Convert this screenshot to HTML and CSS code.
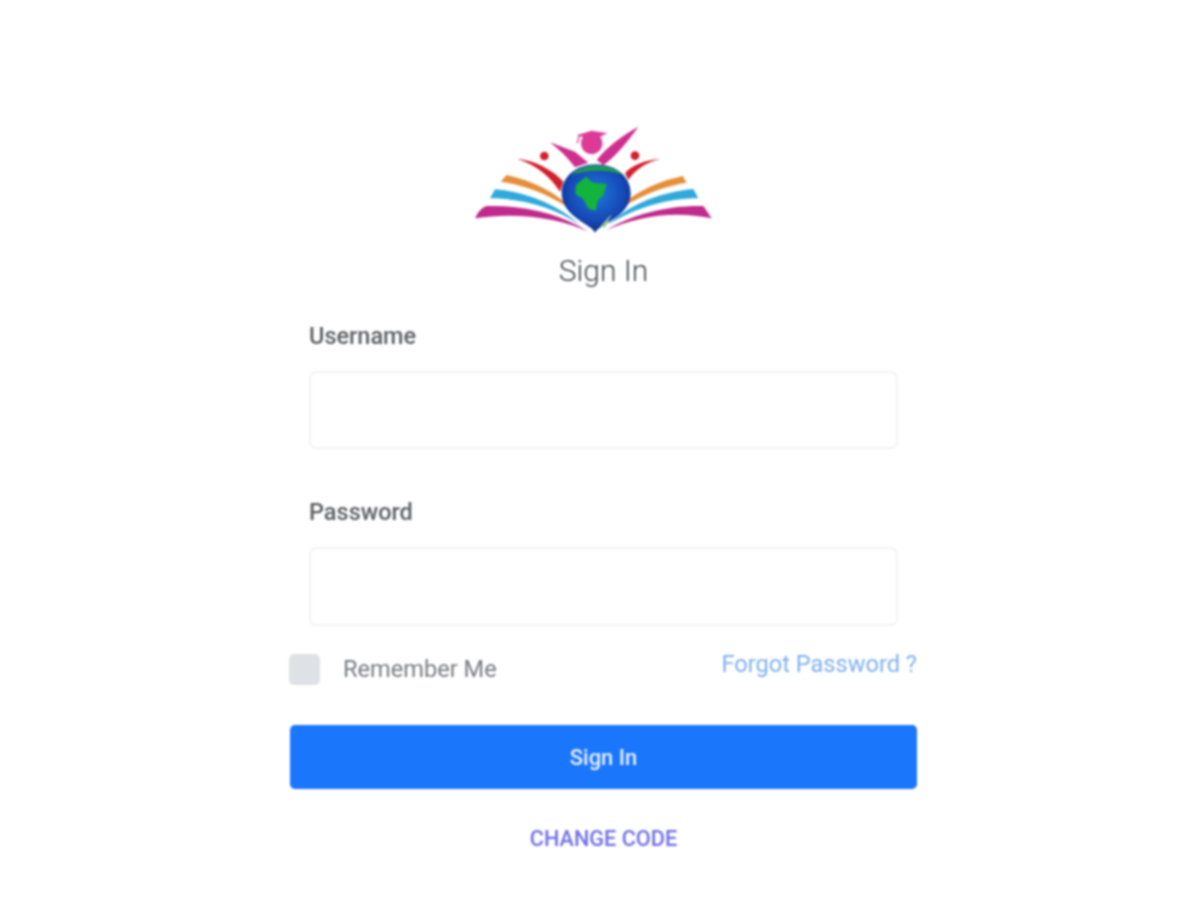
FILE: index.html
```html
<!DOCTYPE html>
<html lang="en">
<head>
<meta charset="utf-8">
<title>Sign In</title>
<link rel="stylesheet" href="styles.css">
</head>
<body>
<main class="page">
  <svg class="logo" viewBox="42 42 720 336" width="240" height="112" aria-label="Logo">
    <defs>
      <radialGradient id="globe" cx="0.5" cy="0.42" r="0.62">
        <stop offset="0" stop-color="#1f78d8"/>
        <stop offset="0.65" stop-color="#1648b8"/>
        <stop offset="1" stop-color="#0d2a78"/>
      </radialGradient>
    </defs>
    <path fill="#c02a8c" d="M45 325C55 305 65 292 80 288C190 285 300 310 385 365C300 325 170 305 45 325Z"/>
    <path fill="#2fa9dc" d="M90 265L105 238C190 245 290 280 360 345C290 295 190 265 90 265Z"/>
    <path fill="#e58f3a" d="M122 215L140 195C210 210 290 245 345 305C280 260 200 225 122 215Z"/>
    <path fill="#c02a8c" d="M730 288L755 325C640 300 530 320 440 360C520 310 630 285 730 288Z"/>
    <path fill="#2fa9dc" d="M700 237L715 265C620 265 520 295 445 345C510 280 610 245 700 237Z"/>
    <path fill="#e58f3a" d="M668 198L680 218C600 230 510 270 450 320C510 250 590 215 668 198Z"/>
    <path fill="#d2202c" d="M172 147C220 150 280 180 310 215L300 245C270 200 230 165 172 147Z"/>
    <path fill="#d2202c" d="M602 147C560 155 525 180 505 210L495 190C515 165 555 150 602 147Z"/>
    <circle fill="#d2202c" cx="253" cy="138" r="13"/>
    <circle fill="#d2202c" cx="525" cy="137" r="13"/>
    <path fill="#cf2f8e" d="M270 97L345 125L385 158L345 172C325 145 300 120 270 97Z"/>
    <path fill="#cf2f8e" d="M535 50C500 100 460 145 430 165L410 150C440 110 490 75 535 50Z"/>
    <circle fill="#dc3a96" cx="395" cy="100" r="32"/>
    <path fill="#dc3a96" d="M350 76L395 62L442 70L400 90Z"/>
    <path fill="none" stroke="#dc3a96" stroke-width="4" d="M358 76L352 100"/>
    <path fill="url(#globe)" d="M405 368C398 345 305 320 305 250C305 200 350 163 408 163C468 163 512 200 512 250C512 320 415 345 405 368Z"/>
    <path fill="#1f9a55" d="M335 195C365 158 450 155 490 195C450 178 380 178 335 195Z"/>
    <path fill="#12b43c" d="M348 225L378 200L398 218L440 222L430 254L412 274L408 302L385 296L370 266L346 252Z"/>
    <path fill="#9bc48f" d="M420 350L455 312L436 352Z"/>
  </svg>
  <h1 class="title">Sign In</h1>
  <form class="form">
    <div class="field">
      <label class="label" for="username">Username</label>
      <input class="input" id="username" type="text">
    </div>
    <div class="field">
      <label class="label" for="password">Password</label>
      <input class="input" id="password" type="password">
    </div>
    <div class="options">
      <label class="remember"><span class="check"></span>Remember Me</label>
      <a class="forgot" href="#">Forgot Password ?</a>
    </div>
    <button class="submit" type="button">Sign In</button>
    <a class="change" href="#">CHANGE CODE</a>
  </form>
</main>
</body>
</html>
```
FILE: styles.css
```css
* { box-sizing: border-box; }
html, body { margin: 0; background: #fff; }
body { font-family: Roboto, "Liberation Sans", sans-serif; }
.page {
  width: 1201px;
  height: 900px;
  padding: 124px 0 0 6px;
  display: flex;
  flex-direction: column;
  align-items: center;
  overflow: hidden;
  filter: blur(1.2px);
}
.logo { display: block; margin-right: 19px; }
.title {
  margin: 17px 0 0;
  font-size: 30px;
  line-height: 36px;
  font-weight: 300;
  color: #43474c;
}
.form { width: 627px; margin-top: 32px; display: flex; flex-direction: column; }
.field { padding: 0 19px; margin-bottom: 48px; display: flex; flex-direction: column; }
.field:nth-child(2) { margin-bottom: 20px; }
.label { font-size: 23.5px; line-height: 30px; font-weight: 500; color: #5c6065; margin-bottom: 20px; }
.input { height: 78px; border: 2px solid #f2f3f5; border-radius: 7px; background: #fff; outline: none; }
.field:nth-child(2) .input { height: 79px; }
.options { display: flex; justify-content: space-between; align-items: flex-start; height: 79px; }
.remember { display: flex; align-items: center; gap: 23px; font-size: 23.6px; line-height: 31px; color: #777c82; margin-left: -1px; margin-top: 8px; }
.check { width: 31px; height: 31px; border-radius: 5px; background: #dee2e6; }
.forgot { font-size: 23.6px; line-height: 30px; color: #7fb0f0; text-decoration: none; margin-top: 3px; }
.submit {
  height: 64px;
  border: 0;
  border-radius: 5px;
  background: #1a76fb;
  color: #e8f1ff;
  font: 500 22px Roboto, "Liberation Sans", sans-serif;
}
.change {
  margin-top: 35px;
  align-self: center;
  font-size: 21.7px;
  line-height: 30px;
  font-weight: 500;
  color: #6f6fe4;
  text-decoration: none;
}
```
